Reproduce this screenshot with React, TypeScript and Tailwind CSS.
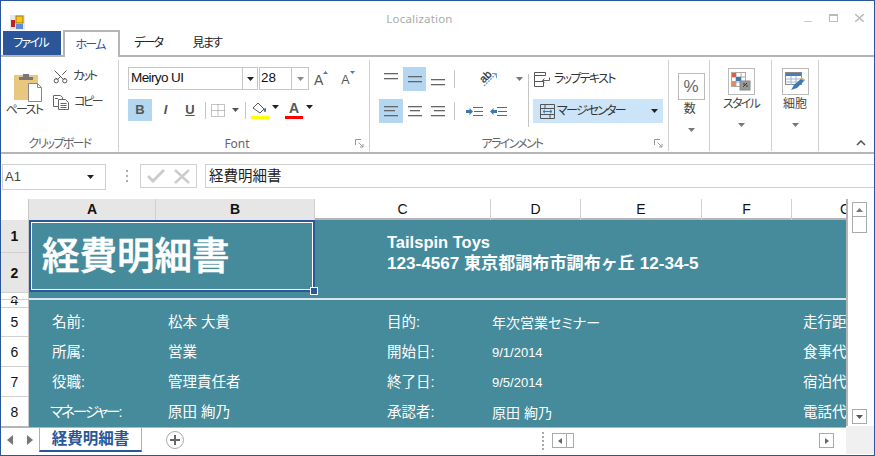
import type { ReactNode } from "react";
import { Scissors } from "lucide-react";

const ui = "font-['Noto_Sans','Noto_Sans_CJK_JP',sans-serif]";
const kana = "text-[12px] tracking-[-1.7px] [font-feature-settings:'palt'] whitespace-nowrap";
const cols = "grid grid-cols-[127px_159px_176px_90px_121px_90px_54px]";

function Caret({ up, className }: { up?: boolean; className?: string }) {
  return (
    <svg width="7" height="4" viewBox="0 0 7 4" className={className}>
      <path d={up ? "M3.5 0L7 4H0z" : "M0 0h7L3.5 4z"} fill="currentColor" />
    </svg>
  );
}

function Lines({ widths, ys, aligned }: { widths: number[]; ys: number[]; aligned: "l" | "c" | "r" }) {
  return (
    <svg width="16" height="16" viewBox="0 0 16 16">
      {widths.map((w, i) => {
        const x = aligned === "l" ? 1 : aligned === "c" ? (16 - w) / 2 : 15 - w;
        return <rect key={i} x={x} y={ys[i]} width={w} height="1.3" fill="#666" />;
      })}
    </svg>
  );
}

function PasteIcon() {
  return (
    <svg width="30" height="31" viewBox="0 0 30 31">
      <rect x="0" y="3" width="24" height="25" fill="#eac77f" />
      <path d="M5 8V5h4V2h6v3h4v3z" fill="#777" />
      <path d="M14.5 11.5h9l4 4v14h-13z" fill="#fff" stroke="#888" />
      <path d="M23.5 11.5v4h4" fill="none" stroke="#888" />
    </svg>
  );
}

function CopyIcon() {
  return (
    <svg width="16" height="15" viewBox="0 0 16 15" fill="#fff" stroke="#666">
      <path d="M.5.5h7l2 2v9h-9z" />
      <path d="M5.5 4.5h7l3 3v7h-10z" />
      <path d="M7.5 8.5h6M7.5 10.5h6M7.5 12.5h6M2 3.5h3" fill="none" />
    </svg>
  );
}

function Launcher() {
  return (
    <svg width="9" height="9" viewBox="0 0 9 9" fill="none" stroke="#999">
      <path d="M.5 6V.5H6" />
      <path d="M3.5 3.5L8 8M8 5v3H5" />
    </svg>
  );
}

function GrowFont({ up }: { up?: boolean }) {
  return (
    <div className="flex items-start font-['Liberation_Sans',sans-serif] text-[#555]">
      <span className={up ? "mt-[2px] text-[14px] leading-[16px]" : "mt-[3px] text-[12.5px] leading-[15px]"}>A</span>
      <svg width="5" height="3" viewBox="0 0 5 3" className="mt-[1px]">
        <path d={up ? "M2.5 0L5 3H0z" : "M0 0h5L2.5 3z"} fill="#4a7ebb" />
      </svg>
    </div>
  );
}

function IndentIcon({ left }: { left?: boolean }) {
  return (
    <svg width="17" height="11" viewBox="0 0 17 11">
      <path d={left ? "M0 5.5L3.5 2v2H7v3H3.5v2z" : "M0 4h3.5V2L7 5.5 3.5 9V7H0z"} fill="#3b78b5" />
      <path d="M7 1.5h10M8 5.5h9M7 9.5h10" stroke="#666" fill="none" />
    </svg>
  );
}

function MergeIcon() {
  return (
    <svg width="15" height="15" viewBox="0 0 15 15" fill="none">
      <path d="M.5.5h14v14H.5zM.5 4.5h14M.5 10.5h14M5 .5v4M10 10.5v4" stroke="#555" />
      <path d="M3 7.5h9M5 5.8L3 7.5l2 1.7M10 5.8l2 1.7-2 1.7" stroke="#3b78b5" />
    </svg>
  );
}

function WrapIcon() {
  return (
    <svg width="16" height="15" viewBox="0 0 16 15" fill="none" stroke="#555">
      <path d="M.5.5h11v3H.5zM.5 9.5h9v5h-9zM.5 3.5v6" />
      <path d="M15.5 5.5v3h-7M10.5 6.5l-2 2 2 2" stroke="#666" />
    </svg>
  );
}

function OrientIcon() {
  return (
    <svg width="20" height="18" viewBox="0 0 20 18" fill="none">
      <path d="M5 16L17 4" stroke="#5aa6e0" strokeDasharray="2 1" strokeWidth="1.3" />
      <path d="M13 3.5h4.5V8" stroke="#5aa6e0" />
      <text x="7" y="10" textAnchor="middle" transform="rotate(-45 7 7)" fontSize="11" fill="#333" stroke="#333" strokeWidth="0.3" fontFamily="Liberation Sans">ab</text>
    </svg>
  );
}

function StyleIcon() {
  return (
    <svg width="20" height="19" viewBox="0 0 20 19">
      <rect x="0.5" y="0.5" width="14" height="14" fill="#fff" stroke="#aaa" />
      <path d="M5 1v13M10 1v13M1 5h13M1 10h13" stroke="#aaa" />
      <rect x="1" y="1" width="4" height="4" fill="#e35a3c" />
      <rect x="5" y="5" width="5" height="4" fill="#3b78b5" />
      <rect x="1" y="9" width="4" height="5" fill="#e58a5c" />
      <rect x="9" y="9" width="10" height="9" fill="#999" stroke="#888" />
      <path d="M12 15l4-4M12 12h2M16 15v-2" stroke="#333" />
    </svg>
  );
}

function CellIcon() {
  return (
    <svg width="20" height="19" viewBox="0 0 20 19">
      <rect x="0.5" y="0.5" width="16" height="12" fill="#fff" stroke="#888" />
      <rect x="1" y="1" width="15" height="3" fill="#4a7ebb" />
      <path d="M1 7h15M1 10h15M6 4v9M11 4v9" stroke="#9db8d8" />
      <path d="M6 18l3-5 8-7 3 2-8 8z" fill="#3b78b5" />
      <path d="M16 6l3 2" stroke="#e8b93c" strokeWidth="2" />
    </svg>
  );
}

function AppIcon() {
  return (
    <svg width="15" height="15" viewBox="0 0 15 15">
      <rect width="15" height="15" fill="#e8e8e8" />
      <rect x="6" y="1" width="7" height="7" fill="#f5c518" stroke="#a07a10" />
      <rect x="1" y="5" width="4" height="7" fill="#c02020" />
      <rect x="6" y="9" width="7" height="5" fill="#5a8fd8" />
    </svg>
  );
}

function GroupLabel({ children, launcher }: { children: ReactNode; launcher?: boolean }) {
  return (
    <div className="flex h-[15px] items-center">
      <span className={`flex-1 text-center leading-[15px] text-[#666] ${kana} ${launcher ? "pr-[9px]" : ""}`}>{children}</span>
      {launcher && (
        <span className="mr-[5px] flex">
          <Launcher />
        </span>
      )}
    </div>
  );
}

function BigButton({ label, className, labelClass, icon }: { label: string; className: string; labelClass?: string; icon: ReactNode }) {
  return (
    <div className={`flex flex-col items-center ${className}`}>
      <div className="flex h-[27px] w-[27px] items-center justify-center border border-[#bbb]">{icon}</div>
      <span className={`mt-[1px] leading-[16px] text-[#444] ${kana} ${labelClass ?? ""}`}>{label}</span>
      <Caret className="mt-[11px] text-[#777]" />
    </div>
  );
}

function Ribbon() {
  return (
    <div className="flex h-[97px] border-b-2 border-[#b5b5b5] pt-[3px] text-[#444]">
      {/* clipboard */}
      <div className="flex h-[91px] w-[118px] flex-col border-r border-[#d0d0d0]">
        <div className="flex h-[76px] flex-1">
          <div className="ml-[3px] flex w-[44px] flex-col items-center pt-[12px]">
            <span className="ml-[6px] flex">
              <PasteIcon />
            </span>
            <span className={`-ml-[4px] mt-[-1px] leading-[16px] ${kana}`}>ペースト</span>
          </div>
          <div className="ml-[4px] flex flex-col pt-[7px]">
            <div className="flex h-[18px] items-center gap-[4px]">
              <Scissors size={17} strokeWidth={1.4} className="-rotate-90 text-[#555]" />
              <span className={`${kana} tracking-[-2.4px]`}>カット</span>
            </div>
            <div className="ml-[1px] mt-[8px] flex h-[18px] items-center gap-[5px]">
              <CopyIcon />
              <span className={`${kana} tracking-[-2.4px]`}>コピー</span>
            </div>
          </div>
        </div>
        <GroupLabel>クリップボード</GroupLabel>
      </div>

      {/* font */}
      <div className="flex h-[91px] w-[251px] flex-col border-r border-[#d0d0d0] pl-[9px]">
        <div className="flex h-[76px] flex-col pt-[7px]">
          <div className="flex items-center">
            <div className="flex h-[23px] w-[130px] items-center border border-[#c6c6c6] pl-[2px] font-['Liberation_Sans',sans-serif] text-[13.5px] tracking-[-0.6px] text-[#111]">
              <span className="flex-1">Meiryo UI</span>
              <span className="flex h-full w-[15px] items-center justify-center border-l border-[#c6c6c6]">
                <Caret className="text-[#222]" />
              </span>
            </div>
            <div className="ml-[1px] flex h-[23px] w-[50px] items-center border border-[#c6c6c6] pl-[1px] font-['Liberation_Sans',sans-serif] text-[13.5px] text-[#111]">
              <span className="flex-1">28</span>
              <span className="flex h-full w-[17px] items-center justify-center border-l border-[#c6c6c6]">
                <Caret className="text-[#888]" />
              </span>
            </div>
            <div className="ml-[5px]">
              <GrowFont up />
            </div>
            <div className="ml-[13px]">
              <GrowFont />
            </div>
          </div>
          <div className="mt-[9px] flex h-[22px] items-center font-['Liberation_Sans',sans-serif] text-[13px] font-bold text-[#555]">
            <span className="flex h-[22px] w-[24px] items-center justify-center bg-[#b3d7f0]">B</span>
            <span className="ml-[2px] flex w-[23px] justify-center italic">I</span>
            <span className="ml-[2px] flex w-[22px] justify-center underline">U</span>
            <span className="ml-[4px] h-[17px] w-px bg-[#c6c6c6]" />
            <svg width="15" height="13" viewBox="0 0 15 13" fill="none" className="ml-[5px]" stroke="#888" strokeDasharray="1 1">
              <path d="M.5.5h13v12H.5zM7 .5v12M.5 6.5h13" />
            </svg>
            <Caret className="ml-[6px] text-[#555]" />
            <span className="ml-[6px] h-[17px] w-px bg-[#c6c6c6]" />
            <div className="ml-[5px] flex w-[18px] flex-col items-center">
              <svg width="16" height="13" viewBox="0 0 16 13" fill="none">
                <path d="M1 6l5-5 6 6-4 4z" stroke="#555" fill="#fff" />
                <path d="M11 7l3-1v3a1 1 0 0 1-2 0z" fill="#3b78b5" />
              </svg>
              <span className="mt-[1px] h-[3px] w-[18px] bg-[#ffff00]" />
            </div>
            <Caret className="ml-[3px] mb-[6px] text-[#222]" />
            <div className="ml-[6px] flex w-[18px] flex-col items-center leading-[13px]">
              <span className="h-[13px] text-[14px]">A</span>
              <span className="mt-[1px] h-[3px] w-[18px] bg-[#ff0000]" />
            </div>
            <Caret className="ml-[3px] mb-[6px] text-[#222]" />
          </div>
        </div>
        <GroupLabel launcher>
          <span className="tracking-normal">Font</span>
        </GroupLabel>
      </div>

      {/* alignment */}
      <div className="flex h-[91px] w-[299px] flex-col border-r border-[#d0d0d0] pl-[9px]">
        <div className="flex h-[76px]">
          <div className="flex w-[149px] flex-col pt-[7px]">
            <div className="flex h-[24px] items-center">
              <span className="flex w-[24px] justify-center">
                <Lines widths={[14, 14]} ys={[2, 7]} aligned="c" />
              </span>
              <span className="flex h-[24px] w-[23px] items-center justify-center bg-[#b3d7f0]">
                <Lines widths={[14, 14]} ys={[5, 10]} aligned="c" />
              </span>
              <span className="flex w-[24px] justify-center">
                <Lines widths={[14, 14]} ys={[8, 13]} aligned="c" />
              </span>
              <span className="ml-[4px] h-[18px] w-px bg-[#c6c6c6]" />
              <span className="ml-[24px]">
                <OrientIcon />
              </span>
              <Caret className="ml-[17px] text-[#777]" />
            </div>
            <div className="mt-[8px] flex h-[24px] items-center">
              <span className="flex h-[24px] w-[24px] items-center justify-center bg-[#b3d7f0]">
                <Lines widths={[14, 11, 14]} ys={[3, 7, 12]} aligned="l" />
              </span>
              <span className="flex w-[23px] justify-center">
                <Lines widths={[14, 10, 14]} ys={[3, 7, 12]} aligned="c" />
              </span>
              <span className="flex w-[24px] justify-center">
                <Lines widths={[14, 11, 14]} ys={[3, 7, 12]} aligned="r" />
              </span>
              <span className="ml-[4px] h-[18px] w-px bg-[#c6c6c6]" />
              <span className="ml-[11px]">
                <IndentIcon />
              </span>
              <span className="ml-[7px]">
                <IndentIcon left />
              </span>
            </div>
          </div>
          <span className="mt-[14px] h-[53px] w-px bg-[#c6c6c6]" />
          <div className="ml-[4px] flex flex-col pt-[7px]">
            <div className="flex h-[24px] items-center gap-[4px] pl-[1px]">
              <WrapIcon />
              <span className={`text-[#333] ${kana}`}>ラップテキスト</span>
            </div>
            <div className="mt-[8px] flex h-[24px] w-[130px] items-center gap-[2px] bg-[#cce4f7] pl-[7px] pr-[5px]">
              <MergeIcon />
              <span className={`flex-1 text-[#333] ${kana}`}>マージ·センター</span>
              <Caret className="text-[#222]" />
            </div>
          </div>
        </div>
        <GroupLabel launcher>アラインメント</GroupLabel>
      </div>

      {/* number, styles, cells */}
      <div className="h-[91px] w-[41px] border-r border-[#d0d0d0] pl-[4px]">
        <BigButton label="数" className="pt-[13px]" labelClass="pr-[4px]" icon={<span className="font-['Liberation_Sans',sans-serif] text-[17px] text-[#666]">%</span>} />
      </div>
      <div className="h-[91px] w-[62px] border-r border-[#d0d0d0] pl-[1px]">
        <BigButton label="スタイル" className="pt-[8px]" icon={<StyleIcon />} />
      </div>
      <div className="h-[91px] w-[47px] border-r border-[#d0d0d0]">
        <BigButton label="細胞" className="pt-[8px]" labelClass="tracking-normal" icon={<CellIcon />} />
      </div>
      <div className="flex flex-1 items-end justify-end pb-[6px] pr-[8px]">
        <svg width="10" height="6" viewBox="0 0 10 6" fill="none" stroke="#555" strokeWidth="1.6">
          <path d="M1 5l4-4 4 4" />
        </svg>
      </div>
    </div>
  );
}

function FormulaBar() {
  return (
    <div className="flex h-[45px] items-start pl-px pt-[10px]">
      <div className="flex h-[26px] w-[104px] items-center border border-[#d0d0d0] pl-[2px] pr-[11px] font-['Liberation_Sans',sans-serif] text-[13px] text-[#444]">
        <span className="flex-1">A1</span>
        <Caret className="text-[#222]" />
      </div>
      <div className="ml-[20px] mt-[6px] flex flex-col gap-[3px]">
        <span className="h-[2px] w-[2px] bg-[#aaa]" />
        <span className="h-[2px] w-[2px] bg-[#aaa]" />
        <span className="h-[2px] w-[2px] bg-[#aaa]" />
      </div>
      <div className="ml-[12px] flex h-[24px] w-[57px] items-center justify-around border border-[#d0d0d0] px-[2px]">
        <svg width="18" height="14" viewBox="0 0 18 14" fill="none" stroke="#ccc" strokeWidth="3">
          <path d="M1 7l5 5L17 1" />
        </svg>
        <svg width="16" height="15" viewBox="0 0 16 15" fill="none" stroke="#ccc" strokeWidth="2.4">
          <path d="M1 1l14 13M15 1L1 14" />
        </svg>
      </div>
      <div className="ml-[8px] flex h-[24px] flex-1 items-center border border-r-0 border-[#d0d0d0] pl-[3px] text-[14.5px] text-[#222]">
        経費明細書
      </div>
    </div>
  );
}

const rowHeaders = [
  { n: "1", h: "h-[33px] bg-[#e6e6e6] border-b border-[#d0d0d0] items-center font-bold" },
  { n: "2", h: "h-[39px] bg-[#e6e6e6] items-center font-bold" },
  { n: "3", h: "h-[8px] border-y border-[#d0d0d0] items-start pt-px" },
  { n: "4", h: "h-[7px] items-end" },
  { n: "5", h: "h-[30px] border-y border-[#d0d0d0] items-center" },
  { n: "6", h: "h-[30px] border-b border-[#d0d0d0] items-center" },
  { n: "7", h: "h-[30px] border-b border-[#d0d0d0] items-center" },
  { n: "8", h: "h-[30px] items-center" },
];

const rows = [
  ["名前:", "松本 大貴", "目的:", "年次営業セミナー", "走行距離:"],
  ["所属:", "営業", "開始日:", "9/1/2014", "食事代:"],
  ["役職:", "管理責任者", "終了日:", "9/5/2014", "宿泊代:"],
  ["マネージャー:", "原田 絢乃", "承認者:", "原田 絢乃", "電話代:"],
];

function Sheet() {
  return (
    <div className="flex h-[228px] font-['Liberation_Sans','Noto_Sans_CJK_JP',sans-serif]">
      <div className="w-[28px] shrink-0 border-r border-[#c8c8c8]">
        <div className="h-[21px]" />
        {rowHeaders.map((r) => (
          <div key={r.n} className={`flex justify-center overflow-hidden text-[14px] leading-[14px] text-[#111] ${r.h}`}>
            {r.n}
          </div>
        ))}
      </div>
      <div className="relative w-[817px] shrink-0 overflow-hidden">
        <div className={`${cols} h-[21px] border-b-2 border-[#b5b5b5] text-center text-[14px] text-[#111]`}>
          <div className="border-r border-[#d0d0d0] bg-[#e6e6e6] font-bold">A</div>
          <div className="border-r border-[#d0d0d0] bg-[#e6e6e6] font-bold">B</div>
          <div className="border-r border-[#d0d0d0]">C</div>
          <div className="border-r border-[#d0d0d0]">D</div>
          <div className="border-r border-[#d0d0d0]">E</div>
          <div className="border-r border-[#d0d0d0]">F</div>
          <div className="whitespace-nowrap pl-[48px]">G</div>
        </div>
        <div className="h-[207px] bg-[#458b9c] text-white">
          <div className={`${cols} h-[72px]`}>
            <div className="relative col-span-2 flex items-center border-2 border-[#2b579a] pl-[11px] pt-[2px] text-[37.5px] font-medium leading-none ring-1 ring-inset ring-white [-webkit-text-stroke:0.6px_white]">
              経費明細書
              <span className="absolute -bottom-[5px] -right-[5px] h-[8px] w-[8px] border border-white bg-[#2b579a]" />
            </div>
            <div className="col-span-5 whitespace-nowrap pl-[72px] pt-[11px] font-bold leading-[22px]">
              <div className="text-[16.5px]">Tailspin Toys</div>
              <div className="text-[17.1px]">123-4567 東京都調布市調布ヶ丘 12-34-5</div>
            </div>
          </div>
          <div className="h-[8px]">
            <div className="h-[6px]" />
            <div className="h-[2px] bg-[#d8e8ec]" />
          </div>
          <div className="h-[7px]" />
          {rows.map((r) => (
            <div key={r[0]} className={`${cols} h-[30px] items-center whitespace-nowrap pt-[2px] text-[14.5px]`}>
              <div className={r[0].length > 4 ? "pl-[21px] tracking-[-2px] [font-feature-settings:'palt']" : "pl-[23px]"}>{r[0]}</div>
              <div className="pl-[12px]">{r[1]}</div>
              <div className="pl-[72px]">{r[2]}</div>
              <div className={`col-span-3 pl-[1px] ${r[3].startsWith("9") ? "text-[13px]" : "text-[14px] [font-feature-settings:'palt']"}`}>{r[3]}</div>
              <div className="overflow-hidden pl-[11px]">{r[4]}</div>
            </div>
          ))}
        </div>
      </div>
      <div className="flex flex-1 flex-col items-center border-l-2 border-[#b5b5b5] pr-[4px] pt-[3px]">
        <span className="flex h-[15px] w-[15px] items-center justify-center border border-[#aaa]">
          <Caret up className="text-[#777]" />
        </span>
        <span className="h-[16px] w-[15px] border border-t-0 border-[#aaa]" />
        <span className="mt-[176px] flex h-[15px] w-[15px] items-center justify-center border border-[#aaa]">
          <Caret className="text-[#555]" />
        </span>
      </div>
    </div>
  );
}

function TabBar() {
  return (
    <div className="-mt-px flex h-[28px]">
      <div className="flex flex-1 border-t-2 border-[#b5b5b5]">
        <div className="flex h-[24px] w-[38px] items-center justify-between px-[6px]">
          <svg width="6" height="10" viewBox="0 0 6 10"><path d="M6 0v10L0 5z" fill="#777" /></svg>
          <svg width="6" height="10" viewBox="0 0 6 10"><path d="M0 0v10l6-5z" fill="#777" /></svg>
        </div>
        <div className="flex h-[24px] w-[103px] items-center justify-center border-x border-b-2 border-[#b0b0b0] border-b-[#2b579a] text-[15.5px] font-bold text-[#2b579a]">
          経費明細書
        </div>
        <svg width="18" height="18" viewBox="0 0 18 18" fill="none" className="ml-[24px] mt-[3px]">
          <circle cx="9" cy="9" r="8.5" stroke="#aaa" />
          <path d="M9 4v10M4 9h10" stroke="#666" strokeWidth="2" />
        </svg>
        <div className="ml-[358px] mt-[4px] flex flex-col gap-[2px]">
          <span className="h-[2px] w-[2px] bg-[#aaa]" />
          <span className="h-[2px] w-[2px] bg-[#aaa]" />
          <span className="h-[2px] w-[2px] bg-[#aaa]" />
          <span className="h-[2px] w-[2px] bg-[#aaa]" />
          <span className="h-[2px] w-[2px] bg-[#aaa]" />
        </div>
        <div className="ml-[8px] mt-[5px] flex h-[15px] w-[22px] border border-[#aaa]">
          <span className="flex w-[14px] items-center justify-center border-r border-[#aaa]">
            <svg width="4" height="6" viewBox="0 0 4 6"><path d="M4 0v6L0 3z" fill="#666" /></svg>
          </span>
        </div>
        <div className="ml-[245px] mt-[5px] flex h-[15px] w-[15px] items-center justify-center border border-[#aaa]">
          <svg width="4" height="6" viewBox="0 0 4 6"><path d="M0 0v6l4-3z" fill="#666" /></svg>
        </div>
      </div>
      <div className="w-[28px] bg-[#f0f0f0]" />
    </div>
  );
}

export default function App() {
  return (
    <div className={`h-[456px] w-[875px] overflow-hidden border border-[#2b579a] bg-white ${ui}`}>
      <div className="relative flex h-[29px] items-center justify-center pr-[36px] pt-[7px] text-[11.5px] tracking-[0.2px] text-[#aaa]">
        <span className="absolute left-[9px] top-[14px] flex">
          <AppIcon />
        </span>
        Localization
        <div className="absolute right-[10px] top-[12px] flex items-center gap-[17px]">
          <span className="mt-[8px] h-px w-[8px] bg-[#ccc]" />
          <span className="h-[8px] w-[9px] border border-t-2 border-[#bbb]" />
          <svg width="9" height="8" viewBox="0 0 9 8" stroke="#bbb" strokeWidth="1.6"><path d="M0 0l9 8M9 0L0 8" /></svg>
        </div>
      </div>
      <div className="flex h-[27px] items-end border-b-2 border-[#b5b5b5] pl-[2px]">
        <div className={`flex h-[24px] w-[58px] items-center justify-center bg-[#2b579a] pr-[3px] text-white ${kana}`}>ファイル</div>
        <div className={`relative top-[2px] ml-[2px] flex h-[27px] w-[57px] items-center justify-center border-x-2 border-t-2 border-[#b5b5b5] bg-white pr-[3px] text-[#2b579a] ${kana}`}>ホーム</div>
        <div className={`ml-[14px] flex h-[24px] items-center text-[#222] ${kana}`}>データ</div>
        <div className={`ml-[30px] flex h-[24px] items-center text-[#222] ${kana}`}>見ます</div>
      </div>
      <Ribbon />
      <FormulaBar />
      <Sheet />
      <TabBar />
    </div>
  );
}
